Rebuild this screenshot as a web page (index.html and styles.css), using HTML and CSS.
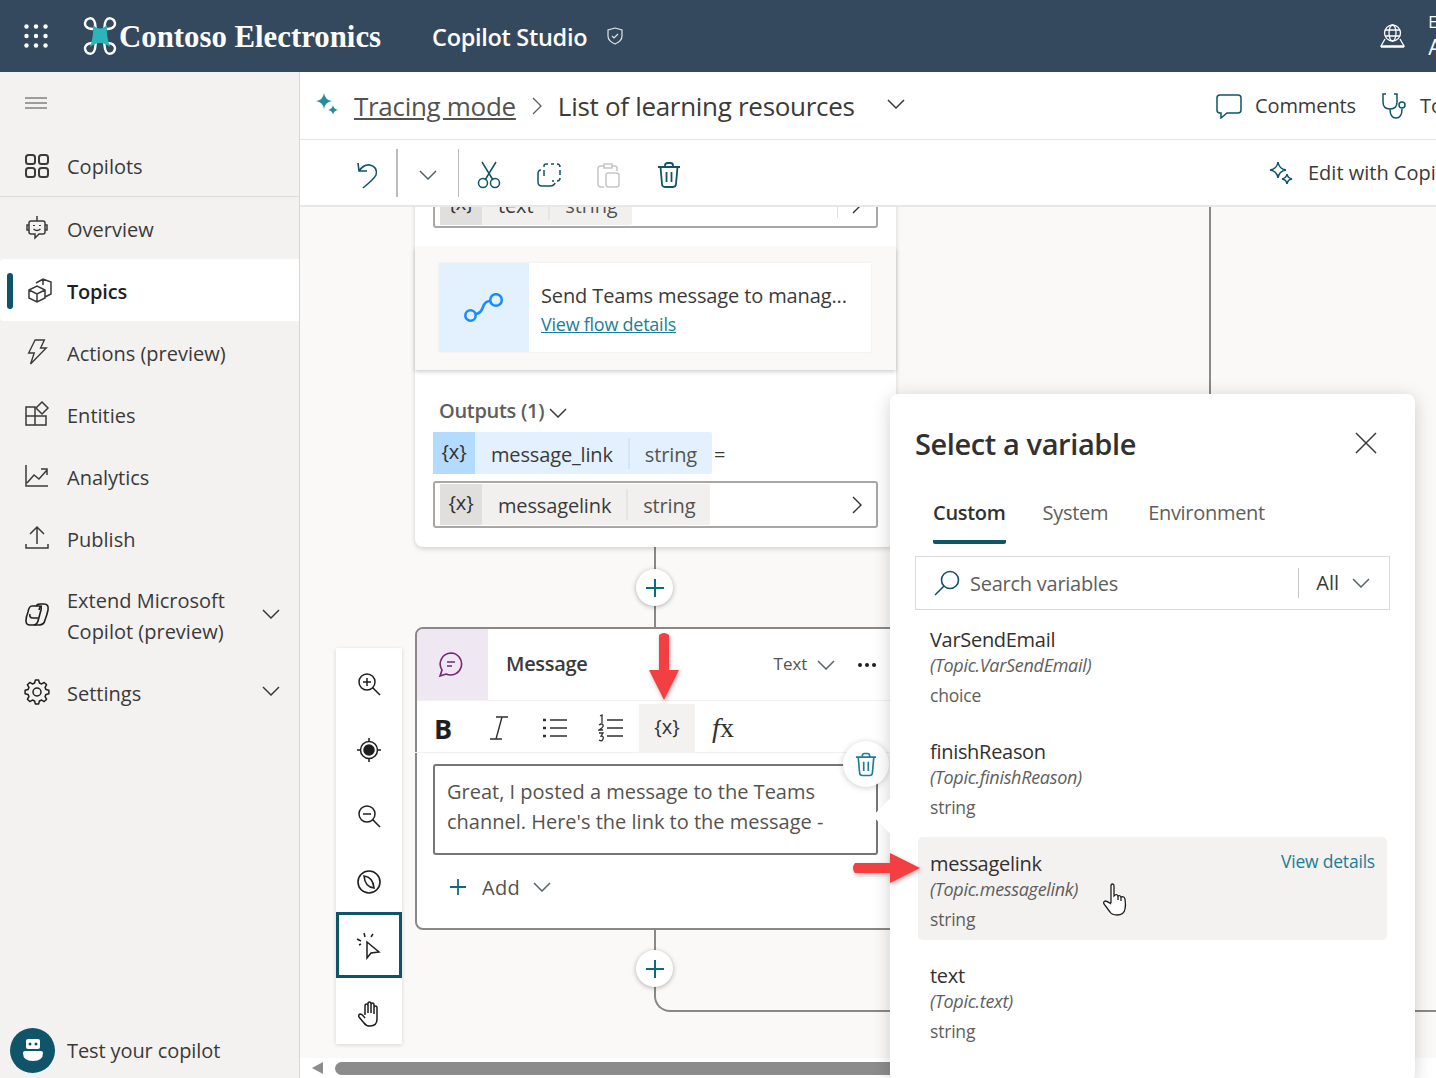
FILE: index.html
```html
<!DOCTYPE html>
<html>
<head>
<title>Copilot Studio</title>
<link rel="stylesheet" href="styles.css">
</head>
<body>
<svg class="defs" width="0" height="0">
  <symbol id="chev" viewBox="0 0 18 10"><path d="M1 1l8 8 8-8" fill="none" stroke="currentColor" stroke-width="1.5"/></symbol>
  <symbol id="trash" viewBox="0 0 24 26"><path d="M1 5h22M8 5V3.500Q8 1 10.500 1h3Q16 1 16 3.500V5M3.500 5l1.500 17Q5.200 25 8 25h8q2.800 0 3-3l1.500-17M9.500 10v10M14.500 10v10" fill="none" stroke="currentColor" stroke-width="1.800"/></symbol>
  <symbol id="plus" viewBox="0 0 18 18"><path d="M9 0v18M0 9h18" fill="none" stroke="currentColor" stroke-width="2"/></symbol>
</svg>

<header class="topbar">
  <svg class="waffle" width="24" height="24" viewBox="0 0 24 24" fill="#fff"><circle cx="2.500" cy="2.500" r="2.200"/><circle cx="12" cy="2.500" r="2.200"/><circle cx="21.500" cy="2.500" r="2.200"/><circle cx="2.500" cy="12" r="2.200"/><circle cx="12" cy="12" r="2.200"/><circle cx="21.500" cy="12" r="2.200"/><circle cx="2.500" cy="21.500" r="2.200"/><circle cx="12" cy="21.500" r="2.200"/><circle cx="21.500" cy="21.500" r="2.200"/></svg>
  <svg class="logo" width="34" height="38" viewBox="0 0 34 38">
    <path d="M10 12C3 12 1 8 2.500 4.500S9 0 11 3.500 12 10 13 13M24 12c7 0 9-4 7.500-7.500S25 0 23 3.500 22 10 21 13M10 26c-7 0-9 4-7.500 7.500S9 38 11 34.500 12 28 13 25M24 26c7 0 9 4 7.500 7.500S25 38 23 34.500 22 28 21 25" fill="none" stroke="#fff" stroke-width="2.400"/>
    <path d="M10 8q7 7 14 0-1 11 3 22-10-8-20 0 4-11 3-22z" fill="#2bb5b8"/>
  </svg>
  <span class="brand">Contoso Electronics</span>
  <span class="product">Copilot Studio</span>
  <svg class="shield" width="16" height="18" viewBox="0 0 16 18"><path d="M8 1l7 2v6q0 5-7 8-7-3-7-8V3zM5 9l2 2 4-4" fill="none" stroke="#dfe5ea" stroke-width="1.200"/></svg>
  <svg class="globe" width="25" height="24" viewBox="0 0 25 24"><g fill="none" stroke="#fff" stroke-width="1.300"><circle cx="12.500" cy="9" r="8"/><ellipse cx="12.500" cy="9" rx="3.500" ry="8"/><path d="M5 6h15M5 12h15M5 15l-4 7h23l-4-7M1 23h23"/></g></svg>
  <div class="user"><span>E</span><span class="user-big">A</span></div>
</header>

<div class="app">
  <nav class="sidebar">
    <div class="hamburger"><svg width="22" height="12" viewBox="0 0 22 12"><path d="M0 1h22M0 6h22M0 11h22" stroke="#4a4947" stroke-width="1"/></svg></div>
    <a class="nav-item nav-first"><svg width="26" height="26" viewBox="0 0 26 26" fill="none" stroke="#3b3a39" stroke-width="2"><rect x="2" y="2" width="9" height="9" rx="2.500"/><rect x="15" y="2" width="9" height="9" rx="2.500"/><rect x="2" y="15" width="9" height="9" rx="2.500"/><rect x="15" y="15" width="9" height="9" rx="2.500"/></svg><span>Copilots</span></a>
    <a class="nav-item"><svg width="26" height="26" viewBox="0 0 26 26" fill="none" stroke="#3b3a39" stroke-width="1.500"><path d="M13 1v5M7 6h12q2 0 2 2v9q0 2-2 2h-4l-4 4v-4H7q-2 0-2-2V8q0-2 2-2zM5 10H3v5h2M21 10h2v5h-2M9.500 14q3.500 3 7 0"/><path d="M10 10v1M16 10v1" stroke-width="2"/></svg><span>Overview</span></a>
    <a class="nav-item nav-active"><svg class="ic-topics" width="26" height="26" viewBox="0 0 26 26" fill="none" stroke="#3b3a39" stroke-width="1.500"><path d="M2 13l8-4 8 4v8l-8 4-8-4zM2 13l8 4 8-4M10 17v8M9 6l7-4 8 3v12l-6 3M16 2v6"/></svg><span>Topics</span></a>
    <a class="nav-item"><svg width="26" height="26" viewBox="0 0 26 26" fill="none" stroke="#3b3a39" stroke-width="1.500"><path d="M11 1h10l-4 8h6L6 25l4-11H4z" transform="translate(1 0) scale(.92 1)"/></svg><span>Actions (preview)</span></a>
    <a class="nav-item"><svg width="26" height="26" viewBox="0 0 26 26" fill="none" stroke="#3b3a39" stroke-width="1.500"><path d="M2 6h9v18H2zM2 15h20v9h-11M11 15V6"/><path d="M18 1l6 6-6 6-6-6z"/></svg><span>Entities</span></a>
    <a class="nav-item"><svg width="26" height="26" viewBox="0 0 26 26" fill="none" stroke="#3b3a39" stroke-width="1.500"><path d="M2 2v21h22M3 20l7-8 5 4 8-9M17 6h6v6"/></svg><span>Analytics</span></a>
    <a class="nav-item"><svg width="26" height="26" viewBox="0 0 26 26" fill="none" stroke="#3b3a39" stroke-width="1.500"><path d="M13 19V3M6 9l7-7 7 7M2 19v4h22v-4"/></svg><span>Publish</span></a>
    <a class="nav-item nav-tall"><svg width="26" height="26" viewBox="0 0 26 26" fill="none" stroke="#1f1f1f" stroke-width="1.600"><path d="M8 4h7q3 0 2 4l-3 11q-1 4-5 4H6q-4 0-4-4 0-4 2-9 1-6 4-6z"/><path d="M12 4q1-2 4-2h4q5 0 4 6-1 5-3 10-1 5-6 5h-5M6 12q-1 4 3 4h5M18 4q-2 0-3 4"/></svg><span>Extend Microsoft<br>Copilot (preview)</span><svg class="nav-chev" width="18" height="10"><use href="#chev"/></svg></a>
    <a class="nav-item"><svg width="26" height="26" viewBox="0 0 26 26" fill="none" stroke="#1f1f1f" stroke-width="1.500" stroke-linejoin="round"><path d="M21.980 10.590L24.880 11.330 24.880 14.670 21.980 15.410 21.050 17.650 22.580 20.220 20.220 22.580 17.650 21.050 15.410 21.980 14.670 24.880 11.330 24.880 10.590 21.980 8.350 21.050 5.780 22.580 3.420 20.220 4.950 17.650 4.020 15.410 1.120 14.670 1.120 11.330 4.020 10.590 4.950 8.350 3.420 5.780 5.780 3.420 8.350 4.950 10.590 4.020 11.330 1.120 14.670 1.120 15.410 4.020 17.650 4.950 20.220 3.420 22.580 5.780 21.050 8.350z"/><circle cx="13" cy="13" r="4"/></svg><span>Settings</span><svg class="nav-chev" width="18" height="10"><use href="#chev"/></svg></a>
    <a class="test-copilot">
      <span class="test-badge"><svg width="20" height="24" viewBox="0 0 20 24" fill="#fff"><path d="M5 1h10q2 0 2 2v6q0 2-2 2H5q-2 0-2-2V3q0-2 2-2zM2 13h16q2 0 2 2 0 8-10 8T0 15q0-2 2-2z"/><circle cx="7" cy="6" r="1.500" fill="#0f5468"/><circle cx="13" cy="6" r="1.500" fill="#0f5468"/></svg></span>
      <span>Test your copilot</span>
    </a>
  </nav>

  <main class="main">
    <div class="titlebar">
      <div class="crumbs">
        <svg class="sparkle" width="24" height="24" viewBox="0 0 24 24"><path d="M9 1q1 7 8 8-7 1-8 8-1-7-8-8 7-1 8-8z" fill="#1f8f9e"/><path d="M18 13q.6 4 5 5-4.400.6-5 5-.6-4.400-5-5 4.400-1 5-5z" fill="#1f8f9e"/></svg>
        <a class="crumb-link">Tracing mode</a>
        <svg class="crumb-sep" width="10" height="18" viewBox="0 0 10 18"><path d="M1 1l8 8-8 8" fill="none" stroke="#605e5c" stroke-width="1.300"/></svg>
        <span class="crumb-now">List of learning resources</span>
        <svg class="crumb-chev" width="18" height="10"><use href="#chev"/></svg>
      </div>
      <div class="title-actions">
        <svg width="26" height="26" viewBox="0 0 26 26" fill="none" stroke="#0f5468" stroke-width="1.500"><path d="M4 2h18q3 0 3 3v12q0 3-3 3H11l-6 5v-5H4q-3 0-3-3V5q0-3 3-3z"/></svg>
        <span>Comments</span>
        <svg class="steth" width="26" height="26" viewBox="0 0 26 26" fill="none" stroke="#0f5468" stroke-width="1.500"><path d="M5 1H2v8q0 7 7 7t7-7V1h-3M9 16q0 9 6 9t6-9"/><circle cx="21" cy="12" r="3"/></svg>
        <span>Topic checker</span>
      </div>
    </div>

    <div class="toolbar">
      <button class="tool tool-undo"><svg width="24" height="28" viewBox="0 0 24 28" fill="none" stroke="#0f5468" stroke-width="1.600"><path d="M2 2l1 8h8M3 10Q8 3 14 4q8 2 6 10-2 4-13 13"/></svg></button>
      <i class="tool-sep"></i>
      <button class="tool"><svg width="18" height="10" color="#55636b"><use href="#chev"/></svg></button>
      <i class="tool-sep tool-sep-thin"></i>
      <button class="tool"><svg width="24" height="28" viewBox="0 0 24 28" fill="none" stroke="#0f5468" stroke-width="1.500"><circle cx="6" cy="22" r="4.500"/><circle cx="18" cy="22" r="4.500"/><path d="M5 1l11 18M19 1L8 19"/></svg></button>
      <button class="tool"><svg width="26" height="26" viewBox="0 0 26 26" fill="none" stroke="#0f5468" stroke-width="1.500"><path d="M8 5V4q0-2 2-2h2M15 2h3M21 2q3 0 3 3M24 8v5M24 16q0 3-3 3M18 19h-2M8 8v6M5 8Q2 8 2 12v8q0 4 4 4h8q4 0 5-3"/></svg></button>
      <button class="tool"><svg width="24" height="26" viewBox="0 0 24 26" fill="none" stroke="#c8c6c4" stroke-width="1.500"><path d="M7 4H4q-3 0-3 3v15q0 3 3 3h3M7 2h8v4H7zM15 4h3q2 0 2 3v2M11 11h8q3 0 3 2v9q0 3-3 3h-8q-2 0-2-3v-9q0-2 2-2z"/></svg></button>
      <button class="tool"><svg width="24" height="26" color="#0f5468"><use href="#trash"/></svg></button>
      <div class="tool-copilot">
        <svg width="24" height="24" viewBox="0 0 24 24" fill="none" stroke="#0f5468" stroke-width="1.500"><path d="M9 1q1 7 8 8-7 1-8 8-1-7-8-8 7-1 8-8zM18 13q.6 4 5 5-4.400.6-5 5-.6-4.400-5-5 4.400-1 5-5z"/></svg>
        <span>Edit with Copilot</span>
      </div>
    </div>

    <div class="canvas">
      <i class="wire wire-right"></i>
      <i class="wire wire-mid"></i>
      <div class="wire-curve"></div>

      <section class="node node-flow">
        <div class="node-input">
          <div class="var-box">
            <div class="chip"><b class="chip-icon">{x}</b><span class="chip-name">text</span><span class="chip-type">string</span></div>
            <i class="var-split"></i>
            <svg class="var-chev" width="10" height="18" viewBox="0 0 10 18"><path d="M1 1l8 8-8 8" fill="none" stroke="#323130" stroke-width="1.400"/></svg>
          </div>
        </div>
        <div class="node-action">
          <div class="flow-card">
            <div class="flow-icon"><svg width="40" height="30" viewBox="0 0 40 30" fill="none" stroke="#1a8cff" stroke-width="2.600"><circle cx="6.500" cy="22.500" r="5.200"/><circle cx="32" cy="7" r="5.800"/><path d="M12 21q5-1 7-7t7-6"/></svg></div>
            <div class="flow-text">
              <div class="flow-title">Send Teams message to manag...</div>
              <a class="flow-link">View flow details</a>
            </div>
          </div>
        </div>
        <div class="node-outputs">
          <div class="outputs-head">Outputs (1) <svg width="18" height="10"><use href="#chev"/></svg></div>
          <div class="output-row">
            <div class="chip chip-blue"><b class="chip-icon">{x}</b><span class="chip-name">message_link</span><span class="chip-type">string</span></div>
            <span class="equals">=</span>
          </div>
          <div class="var-box var-box-out">
            <div class="chip"><b class="chip-icon">{x}</b><span class="chip-name">messagelink</span><span class="chip-type">string</span></div>
            <svg class="var-chev var-chev-end" width="10" height="18" viewBox="0 0 10 18"><path d="M1 1l8 8-8 8" fill="none" stroke="#323130" stroke-width="1.400"/></svg>
          </div>
        </div>
      </section>

      <button class="add-node add-one"><svg width="18" height="18"><use href="#plus"/></svg></button>

      <section class="node node-message">
        <div class="msg-head">
          <div class="msg-icon"><svg width="26" height="26" viewBox="0 0 26 26" fill="none" stroke="#742774" stroke-width="1.600"><path d="M13 2a11 11 0 1 1-5 21l-6 2 2-6A11 11 0 0 1 13 2zM9 11h8M9 15h5"/></svg></div>
          <span class="msg-title">Message</span>
          <span class="msg-kind">Text</span>
          <svg class="msg-chev" width="18" height="10" color="#55636b"><use href="#chev"/></svg>
          <span class="msg-more"><i></i><i></i><i></i></span>
        </div>
        <div class="msg-tools">
          <span class="fmt fmt-b">B</span>
          <span class="fmt"><svg width="20" height="24" viewBox="0 0 20 24" fill="none" stroke="#323130" stroke-width="1.400"><path d="M7 1h12M1 23h12M13 1L7 23"/></svg></span>
          <span class="fmt"><svg width="26" height="20" viewBox="0 0 26 20" fill="none" stroke="#323130" stroke-width="1.400"><path d="M1 2h3M1 10h3M1 18h3" stroke-width="2.400"/><path d="M8 2h17M8 10h17M8 18h17"/></svg></span>
          <span class="fmt"><svg width="26" height="28" viewBox="0 0 26 28" fill="none" stroke="#323130" stroke-width="1.400"><path d="M9 6h16M9 14h16M9 22h16"/><path d="M2 2l2-1v8M1 11q3-2 4 0t-4 5h4M1 19h4l-2 3q3 0 2 3t-4 1" stroke-width="1.300"/></svg></span>
          <span class="fmt fmt-on">{x}</span>
          <span class="fmt fmt-fx"><i>f</i>x</span>
        </div>
        <div class="msg-text">Great, I posted a message to the Teams channel. Here's the link to the message -</div>
        <div class="msg-add"><svg class="msg-plus" width="16" height="16"><use href="#plus"/></svg><span>Add</span><svg class="msg-add-chev" width="18" height="10" color="#55636b"><use href="#chev"/></svg></div>
      </section>

      <button class="add-node add-two"><svg width="18" height="18"><use href="#plus"/></svg></button>
      <button class="trash-float"><svg width="22" height="25" color="#1a7d99"><use href="#trash"/></svg></button>

      <div class="zoom-bar">
        <button class="zoom-btn"><svg width="24" height="24" viewBox="0 0 24 24" fill="none" stroke="#1f1f1f" stroke-width="1.500"><circle cx="10" cy="10" r="8"/><path d="M15.500 15.500L23 23M6 10h8M10 6v8"/></svg></button>
        <button class="zoom-btn"><svg width="26" height="26" viewBox="0 0 26 26" fill="none" stroke="#1f1f1f" stroke-width="1.500"><circle cx="13" cy="13" r="8.500"/><circle cx="13" cy="13" r="5" fill="#1f1f1f"/><path d="M13 1v3M13 22v3M1 13h3M22 13h3"/></svg></button>
        <button class="zoom-btn"><svg width="24" height="24" viewBox="0 0 24 24" fill="none" stroke="#1f1f1f" stroke-width="1.500"><circle cx="10" cy="10" r="8"/><path d="M15.500 15.500L23 23M6 10h8"/></svg></button>
        <button class="zoom-btn"><svg width="26" height="26" viewBox="0 0 26 26" fill="none" stroke="#1f1f1f" stroke-width="1.600"><circle cx="13" cy="13" r="11"/><path d="M8 7q9 1 10 12-9-1-10-12z"/></svg></button>
        <button class="zoom-btn zoom-on"><svg width="26" height="28" viewBox="0 0 26 28" fill="none" stroke="#1f1f1f" stroke-width="1.500"><path d="M11 10v16l4-5 8-1z"/><path d="M8 1l1 4M1 7l4 2M17 2l-2 3M3 13l2-1"/></svg></button>
        <button class="zoom-btn"><svg width="22" height="26" viewBox="0 0 22 26" fill="none" stroke="#1f1f1f" stroke-width="1.500"><path d="M7 14V5q0-2 1.500-2T10 5v7V3q0-2 1.500-2T13 3v9V4q0-2 1.500-2T16 4v9-6q0-2 1.500-2T19 7v11q0 7-7 7-4 0-6-3l-5-6q-1-2 1-3 2 0 5 4"/></svg></button>
      </div>

      <div class="hscroll"><span class="hscroll-arrow"></span><span class="hscroll-thumb"></span></div>

      <aside class="picker">
        <i class="picker-beak"></i>
        <div class="picker-head">
          <h2>Select a variable</h2>
          <svg width="22" height="22" viewBox="0 0 22 22"><path d="M1 1l20 20M21 1L1 21" stroke="#3b3a39" stroke-width="1.500"/></svg>
        </div>
        <div class="tabs">
          <a class="tab tab-on">Custom</a>
          <a class="tab">System</a>
          <a class="tab">Environment</a>
        </div>
        <div class="search">
          <svg width="28" height="26" viewBox="0 0 28 26" fill="none" stroke="#0f5468" stroke-width="1.600"><circle cx="17" cy="10" r="8.500"/><path d="M11 16L2 25"/></svg>
          <span class="search-ph">Search variables</span>
          <span class="search-all">All</span>
          <svg width="18" height="10" color="#55636b"><use href="#chev"/></svg>
        </div>
        <ul class="var-list">
          <li class="var-item"><div class="var-name">VarSendEmail</div><div class="var-topic">(Topic.VarSendEmail)</div><div class="var-type">choice</div></li>
          <li class="var-item"><div class="var-name">finishReason</div><div class="var-topic">(Topic.finishReason)</div><div class="var-type">string</div></li>
          <li class="var-item var-hover"><a class="var-details">View details</a><div class="var-name">messagelink</div><div class="var-topic">(Topic.messagelink)</div><div class="var-type">string</div>
            <svg class="hand" width="26" height="34" viewBox="0 0 26 34" fill="#fff" stroke="#1f1f1f" stroke-width="1.300"><path d="M9 20V3q0-2 1.500-2T12 3v10l1-1q2-1 3 1 2-1 3 1 3-1 4 2 1 6 0 10-1 6-8 6-5 0-7-3l-6-8q-1-2 1-3 2 0 6 3"/><path d="M16 13v4M19 14v4" fill="none"/></svg>
          </li>
          <li class="var-item"><div class="var-name">text</div><div class="var-topic">(Topic.text)</div><div class="var-type">string</div></li>
        </ul>
      </aside>

      <svg class="arrow arrow-down" width="34" height="72" viewBox="0 0 34 72"><path d="M12 4q5-4 10 0v35h10L17 69 2 39h10z" fill="#f33e42"/></svg>
      <svg class="arrow arrow-right" width="72" height="34" viewBox="0 0 72 34"><path d="M4 12h35V2l30 15-30 15V22H4q-4-5 0-10z" fill="#f33e42"/></svg>
    </div>
  </main>
</div>
</body>
</html>
```

FILE: styles.css
```css
* { box-sizing: border-box; }
html, body { margin: 0; height: 100%; overflow: hidden; }
body {
  font-family: "Open Sans", "Noto Sans", sans-serif;
  font-size: 20px;
  color: #3b3a39;
  background: #fff;
  display: flex;
  flex-direction: column;
}
.defs { position: absolute; }
button { border: 0; padding: 0; background: none; font: inherit; }
a { color: inherit; }

/* top bar */
.topbar {
  height: 72px;
  flex: none;
  background: #34495e;
  color: #fff;
  display: flex;
  align-items: center;
  padding-left: 24px;
  overflow: hidden;
}
.topbar > * { flex: none; }
.logo { margin-left: 35px; }
.brand {
  margin: 3px 0 0 2px;
  font-family: "Liberation Serif", serif;
  font-size: 30.800px;
  font-weight: bold;
  white-space: nowrap;
}
.product { margin: 2px 0 0 51px; font-size: 23.500px; font-weight: 600; letter-spacing: -.3px; white-space: nowrap; }
.shield { margin-left: 20px; }
.globe { margin-left: 757px; }
.user { margin-left: 23px; display: flex; flex-direction: column; font-size: 16px; line-height: 20px; }
.user-big { font-size: 22px; line-height: 28px; }

.app { flex: 1; display: flex; min-height: 0; }

/* left nav */
.sidebar {
  width: 300px;
  flex: none;
  background: #f3f2f1;
  border-right: 1px solid #d8d6d4;
  display: flex;
  flex-direction: column;
}
.hamburger { height: 63px; padding: 16px 0 0 25px; }
.nav-item {
  height: 62px;
  flex: none;
  display: flex;
  align-items: center;
  gap: 17px;
  padding-left: 24px;
  position: relative;
  line-height: 31px;
}
.nav-item span { padding-top: 2px; }
.nav-first { border-bottom: 1px solid #dddbd9; }
.nav-active { background: #fff; color: #1f1f1f; font-weight: 600; border-radius: 4px 0 0 4px; letter-spacing: -.2px; }
.nav-active::before {
  content: "";
  position: absolute;
  left: 7px;
  top: 14px;
  width: 6px;
  height: 36px;
  border-radius: 3px;
  background: #0f5468;
}
.ic-topics { margin: 0 -3px 0 3px; }
.nav-tall { height: 92px; }
.nav-chev { position: absolute; left: 262px; top: 50%; margin-top: -6px; color: #3b3a39; }
.test-copilot {
  margin-top: auto;
  height: 56px;
  display: flex;
  align-items: center;
  gap: 12px;
  padding-left: 10px;
  letter-spacing: -.1px;
}
.test-badge {
  width: 45px;
  height: 45px;
  border-radius: 50%;
  background: #0f5468;
  display: flex;
  align-items: center;
  justify-content: center;
}

/* right side */
.main { flex: 1; min-width: 0; display: flex; flex-direction: column; }
.titlebar {
  height: 68px;
  flex: none;
  display: flex;
  align-items: center;
  border-bottom: 1px solid #e6e5e4;
  overflow: hidden;
  background: #fff;
}
.crumbs { flex: 0 0 916px; display: flex; align-items: center; padding-left: 15px; font-size: 26px; }
.sparkle { margin-top: -4px; }
.crumb-link { margin-left: 15px; text-decoration: underline; color: #54524f; letter-spacing: -.3px; }
.crumb-sep { margin-left: 16px; }
.crumb-now { margin-left: 16px; letter-spacing: -.3px; white-space: nowrap; }
.crumb-chev { margin-left: 32px; margin-top: -4px; }
.title-actions { flex: none; display: flex; align-items: center; gap: 13px; white-space: nowrap; letter-spacing: -.1px; }
.steth { margin-left: 12px; }

.toolbar {
  height: 67px;
  flex: none;
  display: flex;
  align-items: center;
  padding-left: 36px;
  border-bottom: 2px solid #e8e7e6;
  background: #fff;
  overflow: hidden;
}
.tool { width: 60px; height: 48px; flex: none; display: flex; align-items: center; justify-content: center; padding-top: 4px; }
.tool-undo { padding-left: 4px; }
.tool-sep { width: 2px; height: 48px; background: #bdbcba; flex: none; }
.tool-sep-thin { width: 1px; }
.tool-copilot { margin-left: 570px; display: flex; align-items: center; gap: 15px; white-space: nowrap; flex: none; }

/* canvas */
.canvas { flex: 1; position: relative; overflow: hidden; background: #faf9f8; }
.wire { position: absolute; width: 2px; background: #8a8886; }
.wire-right { left: 909px; top: 0; height: 190px; }
.wire-mid { left: 354px; top: 338px; height: 90px; }
.wire-curve {
  position: absolute;
  left: 354px;
  top: 720px;
  width: 1100px;
  height: 85px;
  border-left: 2px solid #8a8886;
  border-bottom: 2px solid #8a8886;
  border-bottom-left-radius: 16px;
}
.node { position: absolute; left: 115px; background: #fff; }
.node-flow {
  top: -40px;
  width: 481px;
  border-radius: 0 0 8px 8px;
  box-shadow: 0 2px 5px rgba(0, 0, 0, .16);
}
.node-input { height: 80px; padding: 14px 18px 0; }
.var-box {
  height: 47px;
  width: 445px;
  border: 2px solid #a8a7a5;
  border-radius: 3px;
  display: flex;
  align-items: center;
  padding-left: 5px;
  background: #fff;
}
.var-box-out { margin-top: 4px; }
.chip { height: 41px; display: flex; align-items: center; background: #f1f0ef; border-radius: 2px; font-size: 20px; letter-spacing: -.15px; flex: none; }
.chip-icon { width: 42px; height: 100%; display: flex; align-items: center; justify-content: center; background: #e1dfdd; font-weight: normal; font-size: 20px; color: #323130; padding-bottom: 4px; }
.chip-name { padding: 3px 15px 0 16px; border-right: 2px solid #e6e5e4; line-height: 28px; }
.chip-type { padding: 3px 15px 0 15px; color: #55534f; line-height: 28px; }
.chip-blue { background: #e3f1fe; height: 42px; }
.chip-blue .chip-icon { background: #b3dbff; }
.chip-blue .chip-name { border-color: #d4e6f6; }
.var-split { width: 1px; height: 26px; background: #e1dfdd; margin-left: auto; }
.var-chev { margin: 0 14px; }
.var-chev-end { margin-left: auto; }
.node-action { height: 123px; background: #faf9f8; padding: 16px 24px; box-shadow: 0 2px 4px rgba(0, 0, 0, .18); position: relative; }
.flow-card { width: 432px; height: 89px; display: flex; background: #fff; box-shadow: 0 0 2px rgba(0, 0, 0, .08); }
.flow-icon { width: 90px; background: #e3f1fe; display: flex; align-items: center; justify-content: center; }
.flow-text { padding: 16px 0 0 12px; white-space: nowrap; letter-spacing: -.13px; }
.flow-title { line-height: 33px; }
.flow-link { display: block; color: #1c7e96; text-decoration: underline; font-size: 18px; line-height: 24px; letter-spacing: -.25px; }
.node-outputs { height: 177px; padding: 26px 18px 0; }
.outputs-head { font-weight: 600; color: #605e5c; line-height: 30px; height: 33px; letter-spacing: -.3px; padding-left: 6px; }
.outputs-head svg { color: #3b3a39; }
.output-row { display: flex; align-items: center; height: 48px; }
.equals { margin-left: 2px; padding-top: 3px; }

.add-node {
  position: absolute;
  left: 336px;
  width: 37px;
  height: 37px;
  border-radius: 50%;
  background: #fff;
  box-shadow: 0 1px 5px rgba(0, 0, 0, .3);
  color: #0f6a80;
  display: flex;
  align-items: center;
  justify-content: center;
}
.add-one { top: 362px; }
.add-two { top: 743px; }

.node-message {
  top: 420px;
  width: 540px;
  height: 303px;
  border: 2px solid #8a8886;
  border-radius: 8px;
}
.msg-head { height: 72px; display: flex; align-items: center; border-bottom: 1px solid #f1f0ef; }
.msg-icon { width: 71px; height: 100%; background: #efe7f1; border-radius: 6px 0 0 0; display: flex; align-items: center; justify-content: center; padding: 0 4px 2px 0; }
.msg-title { margin-left: 18px; margin-top: -2px; font-weight: 600; letter-spacing: -.3px; }
.msg-kind { margin-left: 186px; margin-top: -3px; font-size: 17px; color: #55534f; }
.msg-chev { margin-left: 10px; }
.msg-more { margin-left: 23px; display: flex; gap: 3px; }
.msg-more i { width: 4px; height: 4px; border-radius: 50%; background: #1f1f1f; }
.msg-tools { height: 52px; display: flex; align-items: center; margin-left: -2px; border-bottom: 1px solid #f1f0ef; }
.fmt { width: 56px; height: 49px; margin-top: 3px; display: flex; align-items: center; justify-content: center; color: #323130; flex: none; }
.fmt-b { font-weight: 700; font-size: 27px; color: #1f1f1f; }
.fmt-on { background: #f3f2f1; font-size: 20px; padding-bottom: 3px; }
.fmt-fx { font-family: "Liberation Serif", serif; font-size: 28px; }
.msg-text {
  margin: 11px 0 0 16px;
  width: 445px;
  height: 91px;
  border: 2px solid #777675;
  border-radius: 3px;
  padding: 11px 12px;
  line-height: 30px;
  color: #55534f;
}
.msg-add { display: flex; align-items: center; margin: 17px 0 0 33px; height: 30px; color: #55534f; letter-spacing: .3px; }
.msg-plus { color: #0f6a80; margin-right: 16px; }
.msg-add-chev { margin-left: 13px; }

.trash-float {
  position: absolute;
  left: 543px;
  top: 534px;
  width: 46px;
  height: 46px;
  border-radius: 50%;
  background: #fff;
  box-shadow: 0 1px 6px rgba(0, 0, 0, .2);
  display: flex;
  align-items: center;
  justify-content: center;
}

.zoom-bar {
  position: absolute;
  left: 36px;
  top: 441px;
  width: 66px;
  background: #fff;
  box-shadow: 0 1px 4px rgba(0, 0, 0, .15);
}
.zoom-btn { display: flex; width: 66px; height: 66px; align-items: center; justify-content: center; padding-top: 5px; }
.zoom-on { border: 3px solid #0f5468; padding-top: 2px; }

.hscroll { position: absolute; left: 0; right: 0; bottom: 0; height: 20px; background: #fff; display: flex; align-items: center; padding-left: 12px; }
.hscroll-arrow { width: 0; height: 0; border: 6px solid transparent; border-left: 0; border-right: 11px solid #8c8c8c; }
.hscroll-thumb { margin-left: 12px; width: 600px; height: 13px; background: #8c8c8c; border-radius: 7px 0 0 7px; }

/* variable picker */
.picker {
  position: absolute;
  left: 590px;
  top: 187px;
  width: 525px;
  height: 688px;
  background: #fff;
  border-radius: 8px;
  padding: 0 25px;
  box-shadow: 0 3px 18px rgba(0, 0, 0, .18);
}
.picker-beak {
  position: absolute;
  left: -12px;
  top: 409px;
  width: 26px;
  height: 26px;
  background: #fff;
  transform: rotate(45deg);
}
.picker-head { height: 98px; display: flex; align-items: center; justify-content: space-between; padding-right: 13px; position: relative; }
.picker-head h2 { margin: 0; font-size: 29px; font-weight: 600; color: #323130; letter-spacing: -.4px; }
.tabs { display: flex; height: 52px; padding-left: 18px; gap: 37px; position: relative; }
.tabs .tab { line-height: 42px; color: #605e5c; letter-spacing: -.3px; height: 52px; }
.tabs .tab + .tab + .tab { margin-left: 3px; }
.tabs .tab-on { color: #323130; font-weight: 600; border-bottom: 4px solid #0f5468; border-radius: 0 0 2px 2px; }
.search {
  margin-top: 12px;
  width: 475px;
  height: 54px;
  border: 1px solid #dddbd9;
  display: flex;
  align-items: center;
  padding-left: 17px;
  position: relative;
}
.search-ph { margin-left: 9px; color: #605e5c; letter-spacing: -.25px; }
.search-all {
  margin-left: auto;
  height: 30px;
  line-height: 30px;
  border-left: 1px solid #c8c6c4;
  padding-left: 17px;
}
.search svg:last-child { margin: 0 19px 0 13px; }
.var-list { list-style: none; margin: 3px 0 0 3px; padding: 0; width: 469px; }
.var-item { height: 103px; margin-bottom: 9px; padding: 13px 12px 0; position: relative; border-radius: 5px; }
.var-hover { background: #f3f2f1; }
.var-name { line-height: 27px; font-size: 20px; color: #323130; letter-spacing: -.3px; }
.var-topic { font-style: italic; font-size: 18px; line-height: 24px; color: #605e5c; letter-spacing: -.3px; }
.var-type { font-size: 17.500px; line-height: 24px; margin-top: 6px; color: #605e5c; letter-spacing: -.2px; }
.var-details { position: absolute; right: 12px; top: 11px; font-size: 17.500px; line-height: 26px; color: #1c7e96; letter-spacing: -.2px; }
.hand { position: absolute; left: 184px; top: 46px; }

.arrow { position: absolute; filter: drop-shadow(1px 2px 2px rgba(0, 0, 0, .3)); }
.arrow-down { left: 347px; top: 424px; }
.arrow-right { left: 551px; top: 644px; }
```
